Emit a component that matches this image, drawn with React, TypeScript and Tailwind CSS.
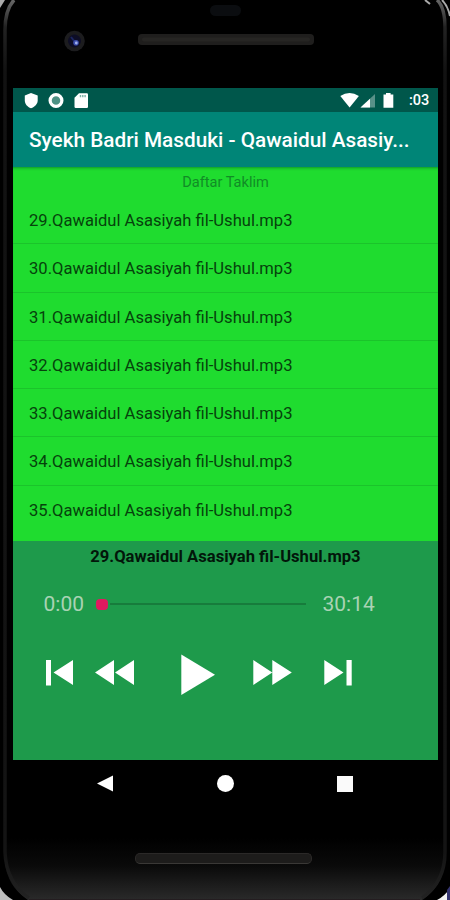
import React from 'react'

const tracks = [29, 30, 31, 32, 33, 34, 35].map((n) => `${n}.Qawaidul Asasiyah fil-Ushul.mp3`)

function PhoneShell() {
  return (
    <svg className="absolute inset-0" width="450" height="900" viewBox="0 0 450 900">
      <defs>
        <linearGradient id="chin" x1="0" y1="0" x2="0" y2="1">
          <stop offset="0" stopColor="#000" />
          <stop offset="0.45" stopColor="#0a0a0a" />
          <stop offset="1" stopColor="#2a2a2a" />
        </linearGradient>
        <linearGradient id="rim" x1="0" y1="0" x2="0" y2="1">
          <stop offset="0" stopColor="#666" />
          <stop offset="0.03" stopColor="#222" />
          <stop offset="0.08" stopColor="#121212" />
          <stop offset="0.95" stopColor="#141414" />
          <stop offset="1" stopColor="#222" />
        </linearGradient>
      </defs>
      <rect width="450" height="900" fill="#000" />
      <path d="M5 838H445V862Q443 886 422 900H28Q7 886 5 862Z" fill="url(#chin)" />
      <path d="M14 0Q5 10 5 30V852Q6 882 29 898" fill="none" stroke="url(#rim)" strokeWidth="3.5" />
      <path d="M437 0Q445 7 445 28V852Q445 882 422 898" fill="none" stroke="url(#rim)" strokeWidth="3.5" />
      <path d="M0 0H5L0 8Z" fill="#aaa" />
      <path d="M425 0L430 4M442 0Q448 6 450 16" fill="none" stroke="#aaa" strokeWidth="2" />
      <path d="M0 887Q4 895 13 900H0Z" fill="#bdbdbd" />
      <path d="M450 888Q445 896 437 900H450Z" fill="#f2f2f2" />
      <path d="M447 890L450 886V900H447Z" fill="#34346f" />
      <path d="M29 899.5H420" stroke="#241d20" />
    </svg>
  )
}

function StatusBar() {
  return (
    <div className="h-[24px] shrink-0 bg-[#00574b] flex items-center justify-between pl-[11px] pr-[8px] text-white">
      <svg width="68" height="17" viewBox="0 0 68 17">
        <path d="M7 1L13.7 3.6V8.2C13.7 12 10.8 14.8 7 16.2C3.2 14.8 .8 12 .8 8.2V3.6Z" fill="#fff" />
        <circle cx="32" cy="8.5" r="5.9" fill="#4d9184" stroke="#fff" strokeWidth="3.2" />
        <circle cx="32" cy="8.5" r="5" fill="none" stroke="#fff" strokeOpacity=".35" />
        <path d="M55 1.3H62.8Q64 1.3 64 2.5V14.8Q64 16 62.8 16H51.7Q50.5 16 50.5 14.8V5.8Z" fill="#fff" />
        <path d="M56.5 3V5.2M58.8 3V5.2M61.1 3V5.2" stroke="#7db0a6" strokeWidth="1.4" />
      </svg>
      <div className="flex items-center">
        <svg width="56" height="17" viewBox="0 0 56 17">
          <path d="M.3 4Q9.5 -2 18.9 4L9.6 15.6Z" fill="#fff" />
          <path d="M35 2V15.5H20.5Z" fill="#fff" fillOpacity=".35" />
          <path d="M30 6.7V15.5H20.5Z" fill="#fff" />
          <path d="M46 1H50.6V2.6H53.3V15.7H43.5V2.6H46Z" fill="#fff" />
        </svg>
        <span className="w-[21px] ml-[13px] text-[14.5px] leading-[17px] font-medium whitespace-nowrap">:03</span>
      </div>
    </div>
  )
}

function Player() {
  return (
    <div className="h-[219px] shrink-0 bg-[#1e9a4b] flex flex-col">
      <div className="h-[31px] text-center text-[16.6px] leading-[31px] font-bold text-[#02160a]">{tracks[0]}</div>
      <div className="mt-[16px] h-[32px] flex items-center pl-[30.5px] text-[21px] text-[#a9d3b4]">
        <span className="w-[52.5px] pt-[2px]">0:00</span>
        <div className="w-[210px] h-[12px] flex items-center">
          <div className="w-[12px] h-[11px] rounded-[4px] bg-[#e0195f]" />
          <div className="flex-1 h-[1.5px] ml-[2px] bg-[#177c3c]" />
        </div>
        <span className="ml-[16.5px] pt-[2px]">30:14</span>
      </div>
      <div className="mt-[34px] flex items-center pl-[33px]">
        <svg width="306" height="42" viewBox="0 0 306 42" fill="#fff">
          <path d="M0 6H5V31.5H0ZM27 6V31L7.5 18.5Z" />
          <path d="M68 6V31L49 18.5ZM88 6V31L69 18.5Z" />
          <path d="M135.3 .5V41L169 20.8Z" />
          <path d="M207.3 6V31L226.3 18.5ZM226.3 6V31L245.8 18.5Z" />
          <path d="M278.3 6V31L297.5 18.5ZM300.5 6H305.7V31.5H300.5Z" />
        </svg>
      </div>
    </div>
  )
}

export default function App() {
  return (
    <div className="relative w-[450px] h-[900px] overflow-hidden bg-black font-['Roboto',sans-serif]">
      <PhoneShell />
      <div className="relative flex flex-col h-full pl-[13px] pr-[12px]">
        <div className="h-[88px] shrink-0">
          <svg width="425" height="88" viewBox="13 0 425 88">
            <rect x="210" y="5" width="31" height="11" rx="5.5" fill="#0b0d10" />
            <circle cx="74.5" cy="41" r="10.3" fill="#1c1c1e" />
            <circle cx="74.5" cy="41" r="6.5" fill="#0d0d25" />
            <path d="M71 37L75 42" stroke="#1b2560" strokeWidth="2" />
            <circle cx="76" cy="42.7" r="2.8" fill="#3a4bab" />
            <circle cx="76.3" cy="43" r="1.4" fill="#9fb0ee" />
            <rect x="138" y="34" width="176" height="11" rx="4" fill="#1f1e1d" />
            <rect x="142" y="37.5" width="168" height="4" rx="2" fill="#262523" />
          </svg>
        </div>
        <StatusBar />
        <div className="h-[55px] shrink-0 bg-[#008577] pl-[16px] text-[20.75px] leading-[56px] font-medium text-white whitespace-nowrap">
          Syekh Badri Masduki - Qawaidul Asasiy...
        </div>
        <div className="h-[374px] shrink-0 overflow-hidden bg-[#1fdc2f] shadow-[inset_0_3px_3px_-2px_rgba(0,80,40,0.5)]">
          <div className="h-[29px] text-center text-[14.6px] leading-[31px] text-[#118c26]">Daftar Taklim</div>
          {tracks.map((track) => (
            <div
              key={track}
              className="h-[48.3px] pl-[16px] border-b border-[#1bc42b] last:border-b-0 text-[16.58px] leading-[49.5px] text-[#06420c] whitespace-nowrap"
            >
              {track}
            </div>
          ))}
        </div>
        <Player />
        <div className="h-[47px] shrink-0">
          <div className="flex items-center justify-between h-full pl-[84px] pr-[85px]">
            <svg width="16" height="17" viewBox="0 0 16 17">
              <path d="M16 .5V16.5L0 8.5Z" fill="#fff" />
            </svg>
            <div className="size-[17px] rounded-full bg-white" />
            <div className="size-[16px] bg-[#fafafa]" />
          </div>
        </div>
        <div className="mt-[46px] ml-[122px] w-[177px] h-[11px] shrink-0 rounded-[5px] border border-[#2b2928] border-b-[#3a3836] bg-[#1d1c1b]" />
      </div>
    </div>
  )
}
